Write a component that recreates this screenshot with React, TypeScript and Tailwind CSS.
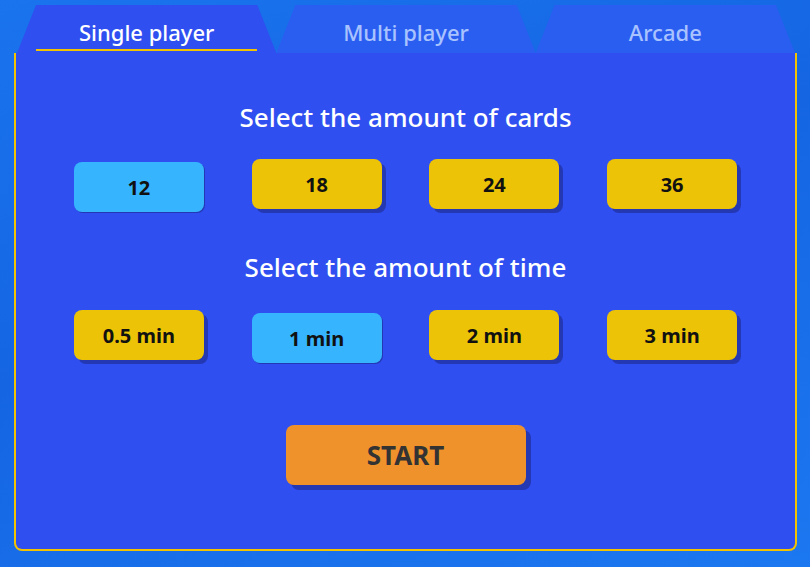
import { useState } from 'react';

const CARDS = ['12', '18', '24', '36'];
const TIMES = ['0.5 min', '1 min', '2 min', '3 min'];
const TABS = ['Single player', 'Multi player', 'Arcade'];

export default function App() {
  const [tab, setTab] = useState(0);
  const [cards, setCards] = useState('12');
  const [time, setTime] = useState('1 min');

  return (
    <main className="w-[810px] h-[567px] overflow-hidden bg-[linear-gradient(160deg,#1a74ee_0%,#1565e2_45%,#1c78f0_100%)] pt-[5px] pl-[14px] font-['Noto_Sans','Open_Sans',sans-serif]">
      <div className="w-[783px]">
        {/* TABS */}
        <div className="flex h-[48px] pl-[3px] pr-[2px]">
          {TABS.map((t, i) => (
            <button
              key={t}
              onClick={() => setTab(i)}
              className={`relative flex-1 h-full [clip-path:polygon(19px_0,calc(100%-19px)_0,100%_100%,0_100%)] ${
                tab === i ? 'bg-[#2f4ff0] text-white' : 'bg-[#2a5ef1] text-[#a9c3ff]'
              }`}
            >
              <span className="block text-[22px] font-medium leading-[28px] mt-[6px]">{t}</span>
              {tab === i && (
                <span className="absolute left-[19px] right-[19px] bottom-[2px] h-[2px] bg-[#f3c300]" />
              )}
            </button>
          ))}
        </div>

        {/* PANEL */}
        <div className="h-[498px] bg-[#2f4ff0] border-x-2 border-b-2 border-[#f3c300] rounded-b-lg px-[34px] pt-[48px] text-center">
          <h2 className="text-[26px] leading-[32px] font-medium text-white">Select the amount of cards</h2>
          <div className="grid grid-cols-4 mt-[26px] h-[54px]">
            {CARDS.map(c => (
              <Choice key={c} label={c} active={cards === c} onClick={() => setCards(c)} />
            ))}
          </div>

          <h2 className="mt-[38px] text-[26px] leading-[32px] font-medium text-white">Select the amount of time</h2>
          <div className="grid grid-cols-4 mt-[27px] h-[54px]">
            {TIMES.map(c => (
              <Choice key={c} label={c} active={time === c} onClick={() => setTime(c)} />
            ))}
          </div>

          <button className="mt-[61px] w-[240px] h-[60px] rounded-lg bg-[#f0922b] text-[#333] text-[26px] font-bold shadow-[5px_5px_0_#2438b4]">
            START
          </button>
        </div>
      </div>
    </main>
  );
}

function Choice({ label, active, onClick }: { label: string; active: boolean; onClick: () => void }) {
  return (
    <div className="flex justify-center">
      <button
        onClick={onClick}
        className={`w-[130px] h-[50px] rounded-lg text-[20px] leading-[28px] pt-[2px] font-bold text-[#111] ${
          active
            ? 'bg-[#36b5fe] mt-[3px] shadow-[1px_1px_0_#2438b4]'
            : 'bg-[#ecc306] shadow-[4px_4px_0_#2438b4]'
        }`}
      >
        {label}
      </button>
    </div>
  );
}
